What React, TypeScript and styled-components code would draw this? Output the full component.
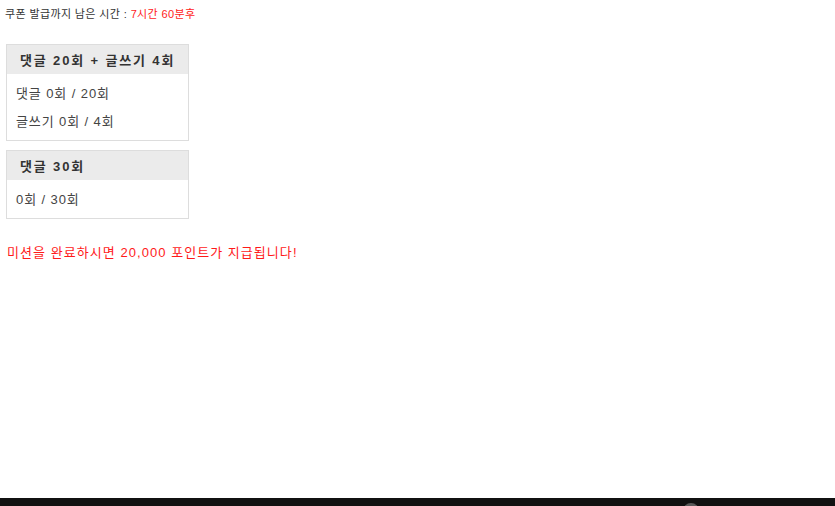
import React from 'react';
import styled, { createGlobalStyle } from 'styled-components';

const GlobalStyle = createGlobalStyle`
  html, body {
    margin: 0;
    padding: 0;
    background: #ffffff;
    font-family: "Liberation Sans", "Noto Sans CJK KR", sans-serif;
    color: #333333;
  }
  * {
    box-sizing: border-box;
  }
`;

const Page = styled.div`
  height: 506px;
  overflow: hidden;
  display: flex;
  flex-direction: column;
`;

const Content = styled.main`
  height: 498px;
  flex-shrink: 0;
  padding: 7px 6px 0 6px;
`;

const Countdown = styled.p`
  margin: 0 0 0 -1px;
  font-size: 11px;
  line-height: 14px;
  color: #333333;
  letter-spacing: 0.38px;
`;

const Remain = styled.span`
  color: #ff1a1a;
`;

const MissionList = styled.div`
  display: flex;
  flex-direction: column;
  gap: 9px;
  margin-top: 23px;
  width: 183px;
`;

const MissionBox = styled.section`
  border: 1px solid #dddddd;
  background: #ffffff;
`;

const MissionHeader = styled.h3`
  margin: 0;
  height: 29px;
  display: flex;
  align-items: center;
  padding: 0 13px;
  background: #ebebeb;
  font-size: 13px;
  font-weight: 700;
  color: #333333;
  letter-spacing: 1.85px;
  white-space: nowrap;
`;

const MissionBody = styled.ul`
  list-style: none;
  margin: 0;
  padding: 4px 9px 6px 9px;
`;

const MissionRow = styled.li`
  height: 28px;
  display: flex;
  align-items: center;
  font-size: 13px;
  color: #444444;
  letter-spacing: 0.9px;
`;

const Notice = styled.p`
  margin: 26px 0 0 1px;
  font-size: 13px;
  line-height: 16px;
  color: #ff1a1a;
  letter-spacing: 1.05px;
`;

const Footer = styled.footer`
  flex: 1;
  background: #111111;
  position: relative;
`;

const FooterIcon = styled.span<{ $left: number }>`
  position: absolute;
  top: 5px;
  left: ${(p) => p.$left}px;
  width: 16px;
  height: 16px;
  border-radius: 50%;
  background: #5a5a5a;
`;

const missions = [
  {
    id: 1,
    title: '댓글 20회 + 글쓰기 4회',
    rows: ['댓글 0회 / 20회', '글쓰기 0회 / 4회'],
  },
  {
    id: 2,
    title: '댓글 30회',
    rows: ['0회 / 30회'],
  },
];

const App: React.FC = () => {
  return (
    <Page>
      <GlobalStyle />
      <Content>
        <Countdown>
          쿠폰 발급까지 남은 시간 : <Remain>7시간 60분후</Remain>
        </Countdown>

        <MissionList>
          {missions.map((mission) => (
            <MissionBox key={mission.id}>
              <MissionHeader>{mission.title}</MissionHeader>
              <MissionBody>
                {mission.rows.map((row) => (
                  <MissionRow key={row}>{row}</MissionRow>
                ))}
              </MissionBody>
            </MissionBox>
          ))}
        </MissionList>

        <Notice>미션을 완료하시면 20,000 포인트가 지급됩니다!</Notice>
      </Content>
      <Footer>
        <FooterIcon $left={683} />
      </Footer>
    </Page>
  );
};

export default App;
